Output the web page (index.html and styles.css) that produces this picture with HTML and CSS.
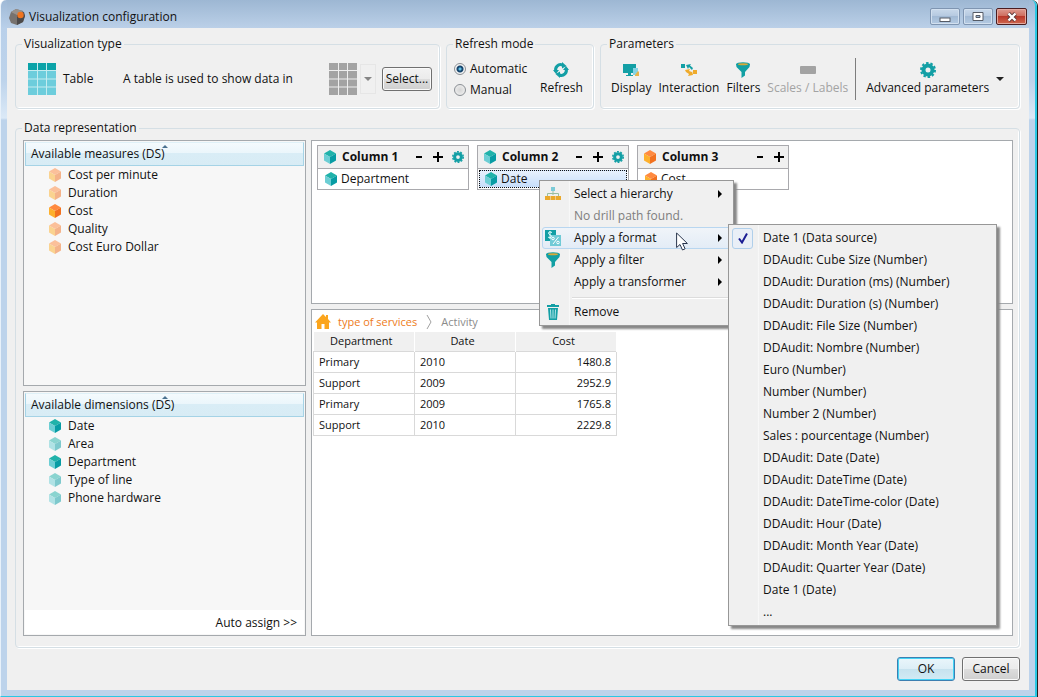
FILE: index.html
```html
<!DOCTYPE html>
<html lang="en">
<head>
<meta charset="utf-8">
<title>Visualization configuration</title>
<link rel="stylesheet" href="styles.css">
</head>
<body>
<svg class="sprite" aria-hidden="true">
  <symbol id="cube" viewBox="0 0 12 14">
    <path class="c-top" d="M6 0 12 3.5 6 7 0 3.5z"/>
    <path class="c-left" d="M0 3.5 6 7v7L0 10.5z"/>
    <path class="c-right" d="M12 3.5 6 7v7l6-3.500z"/>
  </symbol>
  <symbol id="gear" viewBox="0 0 16 16">
    <circle cx="8" cy="8" r="4.500" fill="none" stroke="currentColor" stroke-width="4"/>
    <circle cx="8" cy="8" r="7" fill="none" stroke="currentColor" stroke-width="2" stroke-dasharray="2.500 1.900"/>
  </symbol>
  <symbol id="funnel" viewBox="0 0 16 16">
    <path fill="#12a0a4" d="M1 2h14l-.5 3L10 10v3.500L6.500 16v-6L1.500 5z"/>
    <ellipse cx="8" cy="2.200" rx="7" ry="2" fill="#12a0a4"/>
    <ellipse cx="8" cy="2.300" rx="5" ry="1" fill="#d9a838"/>
  </symbol>
</svg>
<div class="window">
  <header class="titlebar">
    <svg class="app-icon" viewBox="0 0 16 16"><path fill="#77726f" d="M7 0l7 2 2 5-2 6-6 3-6-2-2-5 2-6z"/><path fill="#4d4a4a" d="M8 6v10l6-3 2-6-1-4z"/><path fill="#98918c" d="M2 3l5-3 7 2-6 4z"/><circle cx="11.500" cy="6" r="3.200" fill="#ee7420"/></svg>
    <h1>Visualization configuration</h1>
    <div class="win-buttons">
      <button aria-label="Minimize"><svg viewBox="0 0 12 10"><rect x="1" y="6" width="10" height="3.500" fill="#fff" stroke="#555b66"/></svg></button>
      <button aria-label="Maximize"><svg viewBox="0 0 12 10"><path fill="#fff" fill-rule="evenodd" stroke="#555b66" d="M1 .5h10v8H1zM4 3.500h4v2H4z"/></svg></button>
      <button class="close" aria-label="Close"><svg viewBox="0 0 12 10"><path d="M2.500 1.500 9.500 8.500M9.500 1.500 2.500 8.500" stroke="#5b3838" stroke-width="4"/><path d="M2.500 1.500 9.500 8.500M9.500 1.500 2.500 8.500" stroke="#fff" stroke-width="2.400"/></svg></button>
    </div>
  </header>
  <main class="content">
    <div class="top-row">
      <fieldset class="group group-type">
        <legend>Visualization type</legend>
        <div class="row">
          <svg class="grid-icon" viewBox="0 0 28 32"><path fill="#6dcddc" d="M0 0h28v32H0z"/><path fill="#0ba3a8" d="M0 0h28v7H0z"/><path d="M9.500 0v32M18.500 0v32M0 7.500h28M0 16h28M0 24h28" stroke="#c5ecf0"/></svg>
          <span class="type-name">Table</span>
          <span class="type-text">A table is used to show data in</span>
          <svg class="grid-icon" viewBox="0 0 28 32"><path fill="#a3a3a3" d="M0 0h28v32H0z"/><path d="M9.500 0v32M18.500 0v32M0 7.500h28M0 16h28M0 24h28" stroke="#eee"/></svg>
          <button class="drop" aria-label="More types"><svg viewBox="0 0 8 4"><path fill="#858585" d="M0 0h8L4 4z"/></svg></button>
          <button class="btn select-btn">Select...</button>
        </div>
      </fieldset>
      <fieldset class="group group-refresh">
        <legend>Refresh mode</legend>
        <div class="row">
          <div class="radios">
            <label><input type="radio" name="mode" checked>Automatic</label>
            <label><input type="radio" name="mode">Manual</label>
          </div>
          <button class="tool"><svg viewBox="0 0 16 16" fill="none" stroke="#139fa5" stroke-width="3"><path d="M3 9.500A5 5 0 0 1 9.500 3M13 6.500A5 5 0 0 1 6.500 13"/><path fill="#139fa5" stroke="none" d="M9 0v6.500L13.500 4zM7 16V9.500L2.500 12zM0 8h6L3 12zM16 8h-6l3-4z"/></svg>Refresh</button>
        </div>
      </fieldset>
      <fieldset class="group group-params">
        <legend>Parameters</legend>
        <div class="row">
          <button class="tool"><svg viewBox="0 0 16 16"><path fill="#139fa5" d="M0 2h13v9H8v2h2v1H3v-1h2v-2H0z"/><path fill="#85d3e4" d="M10 6h5v7h-5z"/><path fill="#e9b34a" d="M12 13l3-4 1 1v4h-4z"/></svg>Display</button>
          <button class="tool"><svg viewBox="0 0 16 16"><path fill="#139fa5" d="M0 2h4v4H0zM5 3l5-1-1 1.500L12 6l-1 2-3-3-1 2z"/><path fill="#efab2c" d="M12 8h4v4h-4zM4 8l5-1-1 2 3 1 0-1 1 4-5 1 1-2-3-2z"/></svg>Interaction</button>
          <button class="tool"><svg><use href="#funnel"/></svg>Filters</button>
          <button class="tool" disabled><svg viewBox="0 0 16 16"><rect y="4" width="16" height="8" rx="1" fill="#a3a3a3"/></svg>Scales / Labels</button>
          <span class="divider"></span>
          <button class="tool advanced"><svg class="teal"><use href="#gear"/></svg>Advanced parameters</button>
          <button class="drop-dark" aria-label="More parameters"><svg viewBox="0 0 8 4"><path fill="#222" d="M0 0h8L4 4z"/></svg></button>
        </div>
      </fieldset>
    </div>
    <fieldset class="group group-data">
      <legend>Data representation</legend>
      <div class="data">
        <div class="side">
          <section class="panel list-panel">
            <h2>Available measures (DS)<svg class="sort" viewBox="0 0 6 3"><path fill="#49718f" d="M0 3 3 0l3 3z"/></svg></h2>
            <ul>
              <li><svg class="cube orange faded"><use href="#cube"/></svg>Cost per minute</li>
              <li><svg class="cube orange faded"><use href="#cube"/></svg>Duration</li>
              <li><svg class="cube orange"><use href="#cube"/></svg>Cost</li>
              <li><svg class="cube orange faded"><use href="#cube"/></svg>Quality</li>
              <li><svg class="cube orange faded"><use href="#cube"/></svg>Cost Euro Dollar</li>
            </ul>
          </section>
          <section class="panel list-panel">
            <h2>Available dimensions (DS)<svg class="sort" viewBox="0 0 6 3"><path fill="#49718f" d="M0 3 3 0l3 3z"/></svg></h2>
            <ul>
              <li><svg class="cube"><use href="#cube"/></svg>Date</li>
              <li><svg class="cube faded"><use href="#cube"/></svg>Area</li>
              <li><svg class="cube"><use href="#cube"/></svg>Department</li>
              <li><svg class="cube faded"><use href="#cube"/></svg>Type of line</li>
              <li><svg class="cube faded"><use href="#cube"/></svg>Phone hardware</li>
            </ul>
            <div class="assign"><button>Auto assign &gt;&gt;</button></div>
          </section>
        </div>
        <div class="main-side">
          <section class="panel columns">
            <div class="card">
              <div class="card-head"><svg class="cube"><use href="#cube"/></svg><b>Column 1</b><button aria-label="Collapse"><svg class="pm" viewBox="0 0 10 10"><path d="M2 5h6" stroke="#000" stroke-width="2"/></svg></button><button aria-label="Add"><svg class="pm" viewBox="0 0 10 10"><path d="M0 5h10M5 0v10" stroke="#000" stroke-width="2"/></svg></button><button aria-label="Settings"><svg class="mini-gear teal" viewBox="0 0 16 16"><use href="#gear" width="16" height="16"/></svg></button></div>
              <div class="card-body"><svg class="cube"><use href="#cube"/></svg>Department</div>
            </div>
            <div class="card">
              <div class="card-head"><svg class="cube"><use href="#cube"/></svg><b>Column 2</b><button aria-label="Collapse"><svg class="pm" viewBox="0 0 10 10"><path d="M2 5h6" stroke="#000" stroke-width="2"/></svg></button><button aria-label="Add"><svg class="pm" viewBox="0 0 10 10"><path d="M0 5h10M5 0v10" stroke="#000" stroke-width="2"/></svg></button><button aria-label="Settings"><svg class="mini-gear teal" viewBox="0 0 16 16"><use href="#gear" width="16" height="16"/></svg></button></div>
              <div class="card-body selected"><svg class="cube"><use href="#cube"/></svg>Date
                <div class="menu context" role="menu">
                  <button class="item" role="menuitem"><span class="slot"><svg viewBox="0 0 16 16"><path fill="#7ccbd8" d="M6 1h4v4H6z"/><path d="M8 5v4M2.500 10V7.500h11V10" fill="none" stroke="#9bbf9f"/><path fill="#eaa92c" d="M0 10h5v4H0zM5.500 10h5v4h-5zM11 10h5v4h-5z"/></svg></span>Select a hierarchy<svg class="arrow" viewBox="0 0 4 8"><path d="M0 0l4 4-4 4z"/></svg></button>
                  <button class="item" role="menuitem" disabled><span class="slot"></span>No drill path found.</button>
                  <div class="sub-holder">
                    <button class="item active" role="menuitem"><span class="slot"><svg viewBox="0 0 16 16"><path fill="#139fa5" d="M0 0h11v11H0z"/><path fill="#70cad6" d="M5 5h11v11H5z"/><path d="M7 2.500C5 1.500 3 2 3.500 3.500S7 5 6.500 6.500 4 8 3 7M5 1v8" fill="none" stroke="#e7ffff"/><path d="M13.500 7 8 14" stroke="#fff"/><circle cx="8" cy="8.500" r="1.300" fill="none" stroke="#fff"/><circle cx="13" cy="12.500" r="1.300" fill="none" stroke="#fff"/></svg></span>Apply a format<svg class="arrow" viewBox="0 0 4 8"><path d="M0 0l4 4-4 4z"/></svg></button>
                    <svg class="pointer" viewBox="0 0 12 19"><path fill="#fff" stroke="#28344c" d="M.6 1v14.500l3.400-3 2.500 5.500 2.600-1.200-2.500-5.300h4.800z"/></svg>
                    <div class="menu submenu" role="menu">
                      <button class="item" role="menuitem"><span class="slot"><span class="check"><svg viewBox="0 0 10 12"><path d="M1 6.500 4 10.500 9 1.500" fill="none" stroke="#1c1e94" stroke-width="2"/></svg></span></span>Date 1 (Data source)</button>
                      <button class="item" role="menuitem"><span class="slot"></span>DDAudit: Cube Size (Number)</button>
                      <button class="item" role="menuitem"><span class="slot"></span>DDAudit: Duration (ms) (Number)</button>
                      <button class="item" role="menuitem"><span class="slot"></span>DDAudit: Duration (s) (Number)</button>
                      <button class="item" role="menuitem"><span class="slot"></span>DDAudit: File Size (Number)</button>
                      <button class="item" role="menuitem"><span class="slot"></span>DDAudit: Nombre (Number)</button>
                      <button class="item" role="menuitem"><span class="slot"></span>Euro (Number)</button>
                      <button class="item" role="menuitem"><span class="slot"></span>Number (Number)</button>
                      <button class="item" role="menuitem"><span class="slot"></span>Number 2 (Number)</button>
                      <button class="item" role="menuitem"><span class="slot"></span>Sales : pourcentage (Number)</button>
                      <button class="item" role="menuitem"><span class="slot"></span>DDAudit: Date (Date)</button>
                      <button class="item" role="menuitem"><span class="slot"></span>DDAudit: DateTime (Date)</button>
                      <button class="item" role="menuitem"><span class="slot"></span>DDAudit: DateTime-color (Date)</button>
                      <button class="item" role="menuitem"><span class="slot"></span>DDAudit: Hour (Date)</button>
                      <button class="item" role="menuitem"><span class="slot"></span>DDAudit: Month Year (Date)</button>
                      <button class="item" role="menuitem"><span class="slot"></span>DDAudit: Quarter Year (Date)</button>
                      <button class="item" role="menuitem"><span class="slot"></span>Date 1 (Date)</button>
                      <button class="item" role="menuitem"><span class="slot"></span>...</button>
                    </div>
                  </div>
                  <button class="item" role="menuitem"><span class="slot"><svg><use href="#funnel"/></svg></span>Apply a filter<svg class="arrow" viewBox="0 0 4 8"><path d="M0 0l4 4-4 4z"/></svg></button>
                  <button class="item" role="menuitem"><span class="slot"></span>Apply a transformer<svg class="arrow" viewBox="0 0 4 8"><path d="M0 0l4 4-4 4z"/></svg></button>
                  <div class="sep"></div>
                  <button class="item" role="menuitem"><span class="slot"><svg viewBox="0 0 16 16"><path fill="#139fa5" d="M6 0h4v1h4v2H2V1h4zM3 4h10l-1 12H4z"/><path d="M5.500 5.500l.5 9M8 5.500v9M10.500 5.500l-.5 9" stroke="#b5e8ea"/></svg></span>Remove</button>
                </div>
              </div>
            </div>
            <div class="card">
              <div class="card-head"><svg class="cube orange"><use href="#cube"/></svg><b>Column 3</b><button aria-label="Collapse"><svg class="pm" viewBox="0 0 10 10"><path d="M2 5h6" stroke="#000" stroke-width="2"/></svg></button><button aria-label="Add"><svg class="pm" viewBox="0 0 10 10"><path d="M0 5h10M5 0v10" stroke="#000" stroke-width="2"/></svg></button></div>
              <div class="card-body"><svg class="cube orange"><use href="#cube"/></svg>Cost</div>
            </div>
          </section>
          <section class="panel preview">
            <nav class="crumbs"><svg class="home" viewBox="0 0 16 15"><path fill="#fba51d" d="M8 0l3 3V1h2v4l3 3.500h-2V15H9.500v-5h-3v5H2V8.500H0z"/></svg><a href="#">type of services</a><svg class="chev" viewBox="0 0 6 14"><path d="M1 0l4 7-4 7" fill="none" stroke="#a0a0a0"/></svg><span>Activity</span></nav>
            <table>
              <thead><tr><th>Department</th><th>Date</th><th>Cost</th></tr></thead>
              <tbody>
                <tr><td>Primary</td><td>2010</td><td>1480.8</td></tr>
                <tr><td>Support</td><td>2009</td><td>2952.9</td></tr>
                <tr><td>Primary</td><td>2009</td><td>1765.8</td></tr>
                <tr><td>Support</td><td>2010</td><td>2229.8</td></tr>
              </tbody>
            </table>
          </section>
        </div>
      </div>
    </fieldset>
    <footer class="footer"><button class="btn ok">OK</button><button class="btn">Cancel</button></footer>
  </main>
</div>
</body>
</html>
```
FILE: styles.css
```css
* { box-sizing: border-box; }
body {
  margin: 0;
  background: #fff;
  font: 12px/16px "Open Sans", "Noto Sans", sans-serif;
  color: #111;
}
button {
  font: inherit;
  color: inherit;
  background: none;
  border: 0;
  padding: 0;
}
svg { display: block; flex: none; }
h1, h2, ul { margin: 0; padding: 0; font: inherit; list-style: none; }
.sprite { position: absolute; width: 0; height: 0; }
.teal { color: #139fa5; }

.window {
  display: flex;
  flex-direction: column;
  height: 100vh;
  margin-right: 1px;
  padding: 0 6px 6px;
  border: solid #2ac8e4;
  border-width: 0 2px 1px 1px;
  border-left-color: #e8f1fa;
  border-radius: 6px 6px 0 0;
  background: linear-gradient(#9fb9d6, #b9d0ea 28px, #bdd3eb 80px, #dbe9f7 118px, #bdd3eb 120px);
  box-shadow: 1px 0 #222;
}
.titlebar {
  display: flex;
  align-items: center;
  height: 28px;
  padding: 5px 2px 0;
  gap: 4px;
  background: linear-gradient(#9db7d3, #bbd0e8);
}
.app-icon { width: 16px; height: 16px; }
.titlebar h1 { flex: 1; }
.win-buttons { display: flex; gap: 3px; }
.win-buttons button {
  display: flex;
  align-items: center;
  justify-content: center;
  width: 30px;
  height: 17px;
  border: 1px solid #7f95b1;
  border-radius: 2px;
  background: linear-gradient(#c9d9eb, #b4c8df 50%, #a2bad5 50%, #b4cae2);
  box-shadow: inset 0 0 0 1px #d2e0ef;
}
.win-buttons svg { width: 12px; height: 10px; }
.win-buttons .close {
  width: 31px;
  border-color: #4b1d20;
  background: linear-gradient(#dd9a90, #cd6a5a 50%, #b9382a 50%, #cf6850);
  box-shadow: inset 0 0 0 1px #e3a99f;
}

.content {
  flex: 1;
  display: flex;
  flex-direction: column;
  min-height: 0;
  padding: 8px 9px 9px 8px;
  background: #f0f0f0;
}
.group {
  min-width: 0;
  margin: 0;
  padding: 0 7px;
  border: 1px solid #d5dfe5;
  border-radius: 4px;
  box-shadow: inset -1px -1px #fff, 1px 1px #fff;
}
.group legend { height: 16px; margin-left: -1px; padding: 0 2px; }
.row { display: flex; align-items: center; height: 54px; }
.top-row { display: flex; gap: 6px; height: 73px; }
.group-type { flex: 1; }
.group-refresh { width: 148px; }
.group-params { width: 420px; }

.grid-icon { width: 28px; height: 32px; }
.group-type .row { padding-left: 5px; }
.type-name { flex: none; width: 67px; padding-left: 7px; }
.type-text { flex: 1; white-space: nowrap; }
.drop {
  display: flex;
  align-items: center;
  justify-content: center;
  width: 16px;
  height: 30px;
  margin: 0 6px 0 3px;
  border: 1px solid #e6e6e6;
}
.drop svg, .drop-dark svg { width: 8px; height: 4px; }
.btn {
  height: 24px;
  width: 58px;
  border: 1px solid #707070;
  border-radius: 3px;
  background: linear-gradient(#f2f2f2, #ebebeb 50%, #dddddd 50%, #cfcfcf);
  box-shadow: inset 0 0 0 1px #fafafa;
}
.select-btn { width: 50px; }
.radios { width: 86px; display: grid; gap: 5px; }
.radios label { display: flex; align-items: center; gap: 4px; }
.radios input {
  appearance: none;
  width: 12px;
  height: 12px;
  margin: 0;
  border: 1px solid #8a8f94;
  border-radius: 50%;
  background: radial-gradient(#d5d5d5, #f4f4f4);
}
.radios input:checked { background: radial-gradient(circle, #5fc1e8 0 1px, #17466e 2px 3px, #f4f4f4 4px); }
.tool {
  flex: none;
  display: flex;
  flex-direction: column;
  align-items: center;
  gap: 2px;
  white-space: nowrap;
}
.tool svg { width: 16px; height: 16px; }
.tool:disabled { color: #a3a3a3; }
.group-params .row { gap: 7px; padding-left: 3px; }
.divider { flex: none; width: 1px; height: 42px; background: #7d7d7d; }
.group-params .advanced { margin-left: 3px; }

.group-data { flex: 1; margin-top: 11px; padding: 0 6px 11px 7px; }
.data { display: flex; gap: 5px; height: 100%; padding-top: 4px; }
.side { width: 283px; display: flex; flex-direction: column; gap: 5px; }
.main-side { flex: 1; min-width: 0; display: grid; grid-template-rows: minmax(0, 1fr) minmax(0, 2fr); gap: 5px; }
.panel { border: 1px solid #a5a9ad; background: #fff; min-height: 0; }
.list-panel { flex: 1 1 0; display: flex; flex-direction: column; padding: 1px; background: #f7f7f7; }
.list-panel h2 {
  position: relative;
  height: 24px;
  padding: 3px 5px;
  border: 1px solid #a5d3e6;
  border-top-color: #dff1f8;
  background: linear-gradient(#f4fafd, #ebf6fb 45%, #d9edf6 45%, #d8ecf5);
}
.sort { position: absolute; top: 2px; left: 50%; width: 6px; height: 3px; margin-left: -3px; }
.list-panel ul { flex: 1; padding-left: 24px; }
.list-panel li { display: flex; align-items: center; gap: 7px; height: 18px; }
.cube { width: 12px; height: 14px; }
.cube { --top: #20b2aa; --left: #6cced4; --right: #079ca4; }
.orange { --top: #ff8a40; --left: #fdb02c; --right: #f2711f; }
.faded { opacity: .5; }
.c-top { fill: var(--top); }
.c-left { fill: var(--left); }
.c-right { fill: var(--right); }
.assign { padding: 5px 7px 3px; text-align: right; background: #fff; }

.columns { display: flex; align-items: flex-start; gap: 8px; padding: 4px 5px; }
.card { width: 152px; border: 1px solid #a9a9ad; background: #fff; }
.card-head {
  display: flex;
  align-items: center;
  gap: 9px;
  height: 23px;
  padding: 0 4px 0 6px;
  border-bottom: 1px solid #a9a9ad;
  background: #f0f0f0;
}
.card-head b { flex: 1; margin-left: -3px; }
.pm { width: 10px; height: 10px; }
.mini-gear { width: 12px; height: 12px; }
.card-body {
  position: relative;
  display: flex;
  align-items: center;
  gap: 4px;
  height: 18px;
  margin: 1px;
  padding: 0 5px;
  border: 1px solid transparent;
}
.card-body.selected { border: 1px dotted #111; background: linear-gradient(#e7f1fd, #c7defa); }

.menu {
  position: absolute;
  z-index: 2;
  padding: 2px;
  border: 1px solid #979797;
  background: linear-gradient(90deg, #f0f0f0 28px, #e2e3e3 28px, #fff 29px, #f0f0f0 30px);
  box-shadow: 3px 3px 2px #888;
}
.context { top: 9px; left: 59px; width: 195px; }
.submenu { top: -3px; left: 186px; width: 269px; }
.sub-holder { position: relative; }
.item {
  display: flex;
  align-items: center;
  width: 100%;
  height: 22px;
  padding-right: 8px;
  border: 1px solid transparent;
  border-radius: 3px;
  text-align: left;
  white-space: nowrap;
}
.item:disabled { color: #7d7d7d; }
.item.active { border-color: #b8d6f0; background: linear-gradient(#f0f4f9, #e3ecf6); }
.slot { width: 31px; padding-left: 2px; }
.slot svg { width: 16px; height: 16px; }
.submenu .slot { padding-left: 0; }
.slot .check {
  display: flex;
  align-items: center;
  justify-content: center;
  width: 21px;
  height: 21px;
  border: 1px solid #b0cfea;
  border-radius: 3px;
  background: #e9eff7;
}
.slot .check svg { width: 10px; height: 12px; }
.arrow { width: 4px; height: 8px; margin-left: auto; }
.sep { height: 8px; margin-left: 30px; background: linear-gradient(transparent 4px, #dcdcdc 4px 5px, #fff 5px 6px, transparent 6px); }
.pointer { position: absolute; z-index: 3; top: 5px; left: 134px; width: 12px; height: 19px; }

.preview { padding: 2px 1px; font-size: 11px; }
.crumbs { display: flex; align-items: center; height: 20px; gap: 7px; padding-left: 2px; color: #8b8b8b; }
.crumbs a { color: #ee7b20; text-decoration: none; }
.home { width: 16px; height: 15px; }
.chev { width: 6px; height: 14px; margin: 0 2px; }
table { width: 304px; table-layout: fixed; border-collapse: collapse; }
th { height: 20px; padding: 0 5px 0 0; border-right: 1px solid #fff; background: #f0f0f0; font-weight: 400; }
td { height: 21px; padding: 0 5px; border: 1px solid #d9d9d9; }
td:last-child { text-align: right; }

.footer { display: flex; justify-content: flex-end; gap: 7px; margin-top: 9px; }
.footer .ok {
  border-color: #3c7fb1;
  background: linear-gradient(#eaf6fb, #dceef6 50%, #c6e2ee 50%, #d2ebf5);
  box-shadow: inset 0 0 0 1px #43d3f5;
}
```
